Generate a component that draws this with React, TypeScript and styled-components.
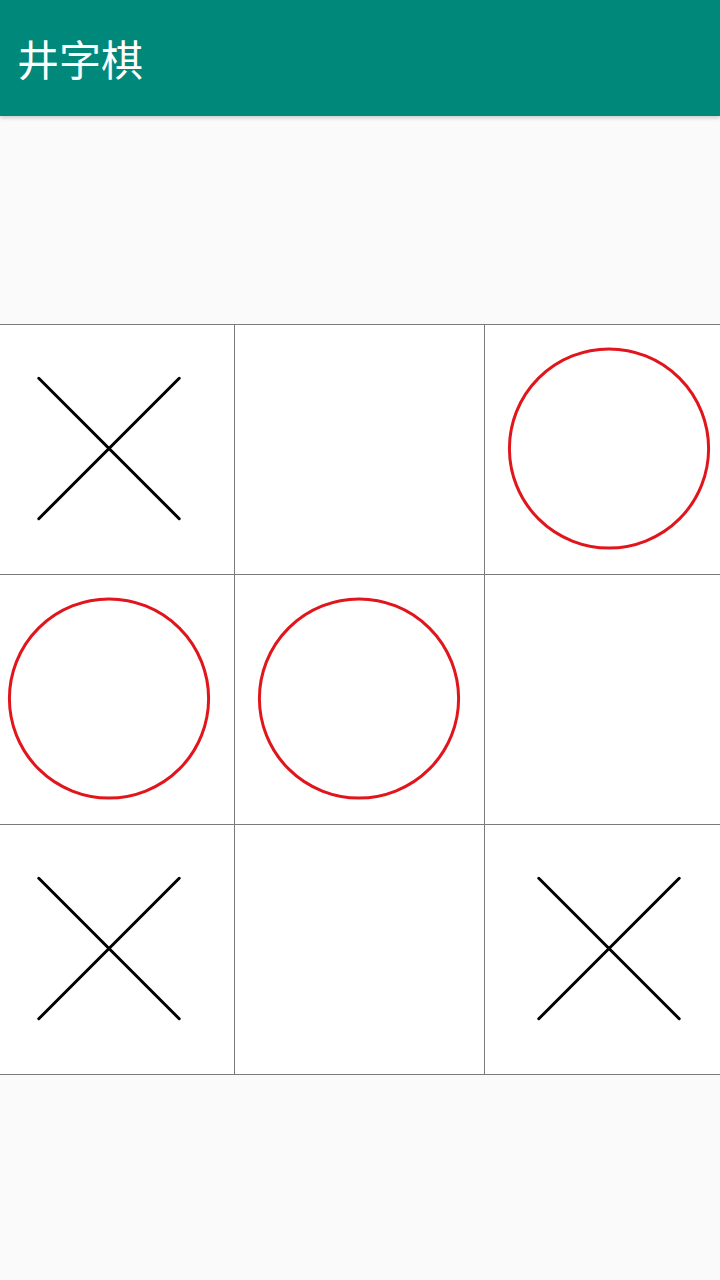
import React from "react";
import styled, { createGlobalStyle } from "styled-components";

const GlobalStyle = createGlobalStyle`
  html, body { margin: 0; padding: 0; background: #fafafa; }
  body { font-family: "Noto Sans CJK SC", "Noto Sans", sans-serif; }
  #root { width: 720px; height: 1280px; overflow: hidden; }
`;

const Screen = styled.div`
  width: 720px;
  height: 1280px;
  display: flex;
  flex-direction: column;
  background: #fafafa;
  overflow: hidden;
`;

const AppBar = styled.header`
  height: 116px;
  flex: 0 0 116px;
  background: #00897b;
  display: flex;
  align-items: center;
  padding-left: 17px;
  box-shadow: 0 2px 4px rgba(0, 0, 0, 0.18);
  position: relative;
  z-index: 1;
`;

const Title = styled.h1`
  margin: 0;
  font-family: "Noto Sans CJK SC", sans-serif;
  font-weight: 400;
  font-size: 42px;
  line-height: 1;
  color: #ffffff;
`;

const Content = styled.main`
  flex: 1;
  display: flex;
  align-items: center;
  justify-content: center;
`;

const Board = styled.div`
  flex: 0 0 auto;
  display: grid;
  grid-template-columns: repeat(3, 250px);
  grid-template-rows: repeat(3, 250px);
  border-top: 1px solid #7a7a7a;
  border-left: 1px solid #7a7a7a;
  margin-left: -2px;
  margin-top: 2px;
`;

const Cell = styled.div`
  box-sizing: border-box;
  background: #ffffff;
  border-right: 1px solid #7a7a7a;
  border-bottom: 1px solid #7a7a7a;
  display: flex;
  align-items: center;
  justify-content: center;
`;

type Mark = "X" | "O" | "";

const board: Mark[] = ["X", "", "O", "O", "O", "", "X", "", "X"];

const CrossMark = () => (
  <svg width="250" height="250" viewBox="0 0 250 250">
    <line x1="54" y1="54" x2="195" y2="195" stroke="#000" strokeWidth="3" strokeLinecap="round" />
    <line x1="195" y1="54" x2="54" y2="195" stroke="#000" strokeWidth="3" strokeLinecap="round" />
  </svg>
);

const CircleMark = () => (
  <svg width="250" height="250" viewBox="0 0 250 250">
    <circle cx="124.5" cy="124.5" r="100" fill="none" stroke="#e0161c" strokeWidth="3" />
  </svg>
);

export default function App() {
  return (
    <>
      <GlobalStyle />
      <Screen>
        <AppBar>
          <Title>井字棋</Title>
        </AppBar>
        <Content>
          <Board>
            {board.map((m, i) => (
              <Cell key={i}>
                {m === "X" && <CrossMark />}
                {m === "O" && <CircleMark />}
              </Cell>
            ))}
          </Board>
        </Content>
      </Screen>
    </>
  );
}
